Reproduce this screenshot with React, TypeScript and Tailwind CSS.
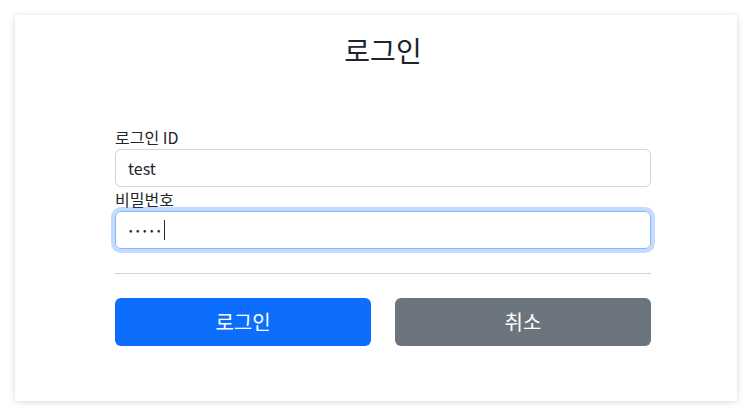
export default function App() {
  return (
    <div
      className="w-[752px] h-[416px] bg-white p-[15px] text-[#212529]"
      style={{ fontFamily: '"Noto Sans CJK KR", "Noto Sans", sans-serif' }}
    >
      <div className="h-[386px] bg-white rounded-[3px] shadow-[0_1px_6px_rgba(0,0,0,0.16)] pt-[18px] pl-[100px] pr-[86px]">
        {/* Title */}
        <h2 className="text-center text-[28px] leading-[34px] font-normal">로그인</h2>

        <form className="mt-[58px] flex flex-col">
          <label className="text-[16px] leading-[24px]">로그인 ID</label>
          <div className="h-[38px] border border-[#ced4da] rounded-[6px] px-[12px] flex items-center text-[16px]">
            test
          </div>

          <label className="text-[16px] leading-[24px]">비밀번호</label>
          <div className="h-[38px] border border-[#86b7fe] rounded-[6px] pl-[12px] pr-[12px] flex items-center shadow-[0_0_0_4px_rgba(13,110,253,0.25)]">
            <span className="text-[10px] tracking-[3.6px] leading-none ml-[1px]">•••••</span>
            <span className="w-px h-[20px] bg-[#212529]" />
          </div>

          <hr className="mt-[24px] border-t border-[#d3d3d3]" />

          <div className="mt-[24px] grid grid-cols-2 gap-[24px]">
            <button type="button" className="h-[48px] rounded-[6px] bg-[#0d6efd] text-white text-[20px]">
              로그인
            </button>
            <button type="button" className="h-[48px] rounded-[6px] bg-[#6c757d] text-white text-[20px]">
              취소
            </button>
          </div>
        </form>
      </div>
    </div>
  );
}
